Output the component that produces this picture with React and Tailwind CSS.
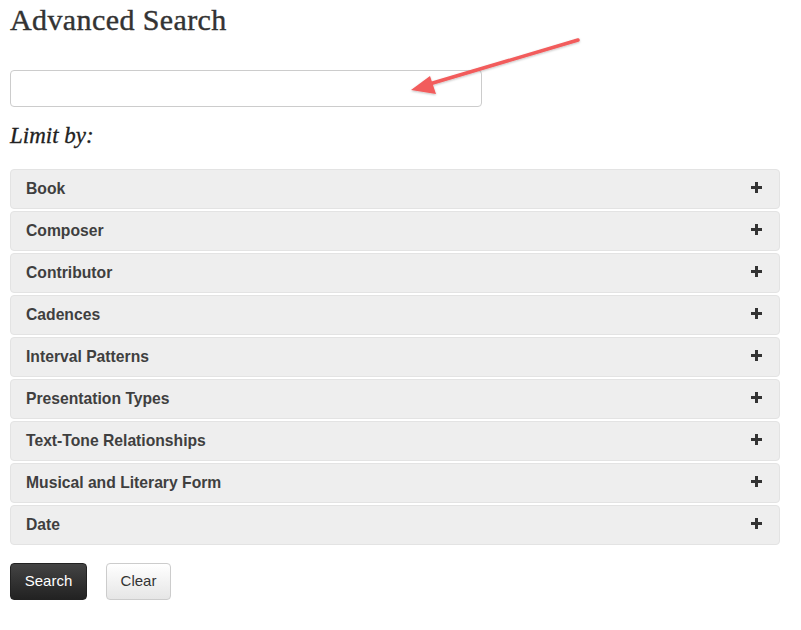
import React from "react";

const items = [
  "Book",
  "Composer",
  "Contributor",
  "Cadences",
  "Interval Patterns",
  "Presentation Types",
  "Text-Tone Relationships",
  "Musical and Literary Form",
  "Date",
];

export default function App() {
  return (
    <div className="relative w-[801px] h-[630px] bg-white overflow-hidden">
      <div className="pl-[10px] pr-[21px] pt-[2px]">
        <h1 className="text-[30px] leading-[36px] tracking-[0.4px] text-[#333] font-['Liberation_Serif',serif] [-webkit-text-stroke:0.4px_#333]">
          Advanced Search
        </h1>
        <input
          type="text"
          className="mt-[32px] block w-[472px] h-[37px] border border-[#ccc] rounded-[4px] bg-white"
        />
        <div className="mt-[14px] text-[23px] leading-[30px] italic text-[#222] font-['Liberation_Serif',serif] [-webkit-text-stroke:0.3px_#222]">
          Limit by:
        </div>
        <div className="mt-[18px] flex flex-col gap-[2px]">
          {items.map((t) => (
            <div
              key={t}
              className="h-[40px] flex items-center justify-between pl-[15px] pr-[17px] bg-[#eeeeee] border border-[#e3e3e3] rounded-[4px]"
            >
              <span className="text-[15.7px] font-bold text-[#3f3f3f] font-['Liberation_Sans',sans-serif]">
                {t}
              </span>
              <svg width="11" height="11" viewBox="0 0 11 11" className="-mt-[3px]">
                <rect x="4" y="0" width="3" height="11" fill="#333" />
                <rect x="0" y="4" width="11" height="3" fill="#333" />
              </svg>
            </div>
          ))}
        </div>
        <div className="mt-[18px] flex gap-[19px]">
          <button className="w-[77px] h-[37px] rounded-[4px] text-white text-[15px] font-['Liberation_Sans',sans-serif] bg-gradient-to-b from-[#444] to-[#222] border border-[#222]">
            Search
          </button>
          <button className="w-[65px] h-[37px] rounded-[4px] text-[#333] text-[15px] font-['Liberation_Sans',sans-serif] bg-gradient-to-b from-[#fff] to-[#e6e6e6] border border-[#ccc]">
            Clear
          </button>
        </div>
      </div>
      <svg
        className="absolute left-0 top-0 pointer-events-none"
        width="801"
        height="630"
        viewBox="0 0 801 630"
      >
        <defs>
          <filter id="sh" x="-20%" y="-20%" width="140%" height="140%">
            <feDropShadow dx="0" dy="1" stdDeviation="1.2" floodColor="#000" floodOpacity="0.25" />
          </filter>
        </defs>
        <g filter="url(#sh)">
          <line x1="578" y1="40" x2="426" y2="85" stroke="#f25b5b" strokeWidth="3.5" strokeLinecap="round" />
          <polygon points="411,90 430,76 436,94" fill="#f25b5b" />
        </g>
      </svg>
    </div>
  );
}
